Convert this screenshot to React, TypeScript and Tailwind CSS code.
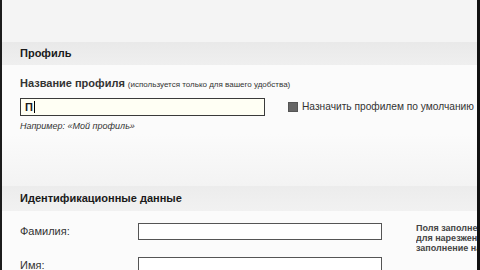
import React from "react";

export default function App() {
  return (
    <div
      className="w-[480px] h-[270px] overflow-hidden flex bg-[#f9f9f9] text-[#1a1a1a]"
      style={{ fontFamily: '"Liberation Sans", Arial, sans-serif' }}
    >
      <div className="w-[2px] shrink-0 bg-[#1c1c1c]" />
      <div className="flex-1 flex flex-col min-w-0">
        <div className="h-[42px] shrink-0 bg-[#f4f4f4]" />
        <div className="h-[23px] shrink-0 flex items-center pl-[18px] bg-gradient-to-b from-[#e9e9e9] to-[#efefef]">
          <span className="text-[11px] font-bold">Профиль</span>
        </div>
        <div className="pl-[18px] pt-[10px] bg-[#fbfbfb]">
          <div className="flex items-baseline gap-[3px] h-[14px]">
            <span className="text-[11px] font-bold text-[#333]">Название профиля</span>
            <span className="text-[8px] text-[#333]">(используется только для вашего удобства)</span>
          </div>
          <div className="flex items-center mt-[9px]">
            <div className="w-[245px] h-[18px] shrink-0 border border-[#3a3a3a] bg-[#fffff4] flex items-center pl-[4px] text-[11px] font-bold">
              П<span className="w-px h-[12px] bg-black ml-px" />
            </div>
            <div className="flex items-center ml-[23px] gap-[4px] shrink-0">
              <div className="w-[10px] h-[10px] border border-[#555] bg-[#666]" />
              <span className="text-[10.2px] text-[#333] whitespace-nowrap">Назначить профилем по умолчанию</span>
            </div>
          </div>
          <div className="text-[9px] italic text-[#333] mt-[4px]">Например: «Мой профиль»</div>
        </div>
        <div className="h-[52px] shrink-0 bg-gradient-to-b from-[#fbfbfb] to-[#f3f3f3]" />
        <div className="h-[25px] shrink-0 flex items-center pl-[18px] bg-gradient-to-b from-[#ececec] to-[#f1f1f1]">
          <span className="text-[11px] font-bold">Идентификационные данные</span>
        </div>
        <div className="flex-1 pl-[18px] pt-[12px] bg-[#fbfbfb] flex min-w-0">
          <div className="w-[118px] shrink-0 flex flex-col">
            <div className="h-[17px] flex items-center text-[11px] text-[#333]">Фамилия:</div>
            <div className="h-[17px] mt-[17px] flex items-center text-[11px] text-[#333]">Имя:</div>
          </div>
          <div className="flex flex-col shrink-0">
            <div className="w-[244px] h-[17px] border border-[#555] bg-white" />
            <div className="w-[244px] h-[17px] mt-[17px] border border-[#555] bg-white" />
          </div>
          <div className="ml-[34px] min-w-0 overflow-hidden text-[9px] leading-[10px] font-bold text-[#444]">
            <div className="whitespace-nowrap">Поля заполнено</div>
            <div className="whitespace-nowrap">для нарезжени</div>
            <div className="whitespace-nowrap">заполнение на</div>
          </div>
        </div>
      </div>
      <div className="w-[3px] shrink-0 bg-[#111]" />
    </div>
  );
}
